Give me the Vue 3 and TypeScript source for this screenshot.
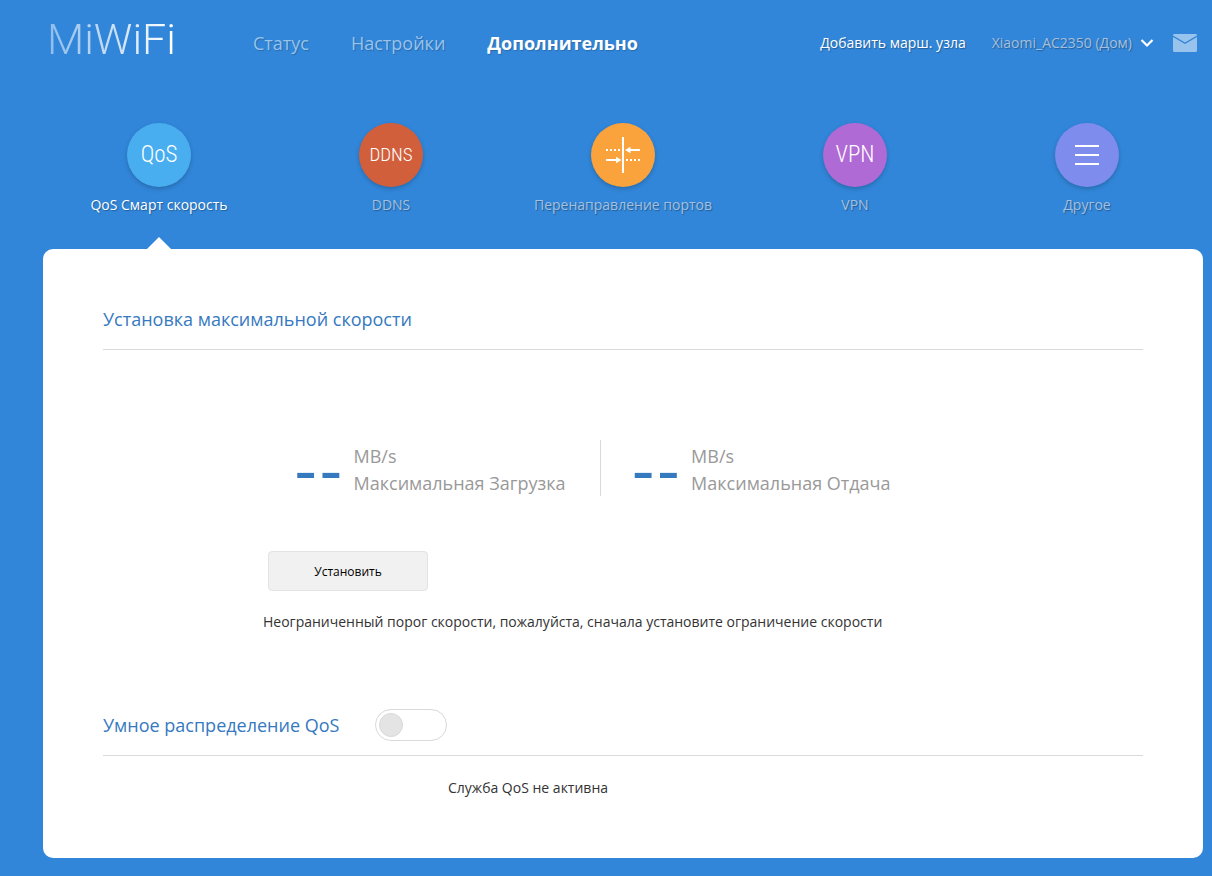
<script setup lang="ts">
import { ref } from 'vue'

interface NavItem { label: string; active?: boolean }
interface Feature { id: string; label: string; glyph?: string; active?: boolean }
interface Speed { id: string; value: string; label: string }

const nav: NavItem[] = [
  { label: 'Статус' },
  { label: 'Настройки' },
  { label: 'Дополнительно', active: true },
]

const features: Feature[] = [
  { id: 'qos', label: 'QoS Смарт скорость', glyph: 'QoS', active: true },
  { id: 'ddns', label: 'DDNS', glyph: 'DDNS' },
  { id: 'ports', label: 'Перенаправление портов' },
  { id: 'vpn', label: 'VPN', glyph: 'VPN' },
  { id: 'other', label: 'Другое' },
]

const speeds: Speed[] = [
  { id: 'down', value: '--', label: 'Максимальная Загрузка' },
  { id: 'up', value: '--', label: 'Максимальная Отдача' },
]

const qosEnabled = ref(false)
</script>

<template>
  <div class="page">
    <header class="header">
      <a class="logo" href="#">MiWiFi</a>
      <nav class="nav">
        <a v-for="item in nav" :key="item.label" href="#" class="nav-link" :class="{ active: item.active }">{{ item.label }}</a>
      </nav>
      <div class="account">
        <a class="add-node" href="#">Добавить марш. узла</a>
        <button type="button" class="router">
          Xiaomi_AC2350 (Дом)
          <svg class="chevron" viewBox="0 0 14 10" aria-hidden="true">
            <path d="M1.500 2L7 7.500L12.500 2" fill="none" stroke="#fff" stroke-width="2.200" />
          </svg>
        </button>
        <button type="button" class="mail" aria-label="Сообщения">
          <svg viewBox="0 0 24 18" aria-hidden="true">
            <path d="M1 0H23Q24 0 24 1.500L12 8.500L0 1.500Q0 0 1 0Z" />
            <path d="M0 3L12 10L24 3V16.500Q24 18 22.500 18H1.500Q0 18 0 16.500Z" />
          </svg>
        </button>
      </div>
    </header>

    <nav class="features">
      <a v-for="f in features" :key="f.id" href="#" class="feature" :class="{ active: f.active }">
        <span class="disc" :class="f.id">
          <template v-if="f.glyph">{{ f.glyph }}</template>
          <svg v-else-if="f.id === 'ports'" viewBox="0 0 64 64" aria-hidden="true">
            <g fill="#fff">
              <rect x="31" y="14" width="2" height="36" />
              <rect x="38" y="26" width="11" height="2" />
              <path d="M34 27L39.500 23.800V30.200Z" />
              <rect x="15" y="36" width="11" height="2" />
              <path d="M30.500 37L25 33.800V40.200Z" />
            </g>
            <g stroke="#fff" stroke-width="2" stroke-dasharray="2 2">
              <path d="M15 27H29" />
              <path d="M35 37H49" />
            </g>
          </svg>
          <svg v-else viewBox="0 0 64 64" aria-hidden="true">
            <path d="M20 23H44M20 32H44M20 41H44" stroke="#fff" stroke-width="2" />
          </svg>
        </span>
        <span class="feature-label">{{ f.label }}</span>
      </a>
    </nav>

    <main class="card">
      <section>
        <h2 class="title">Установка максимальной скорости</h2>
        <div class="limits">
          <div class="speeds">
            <div v-for="s in speeds" :key="s.id" class="speed">
              <span class="value">{{ s.value }}</span>
              <span class="unit">MB/s<br>{{ s.label }}</span>
            </div>
          </div>
          <button type="button" class="set">Установить</button>
          <p class="hint">Неограниченный порог скорости, пожалуйста, сначала установите ограничение скорости</p>
        </div>
      </section>
      <section>
        <h2 class="title with-switch">
          <label for="qos-switch">Умное распределение QoS</label>
          <input id="qos-switch" v-model="qosEnabled" type="checkbox" class="switch">
        </h2>
        <p class="status">Служба QoS не активна</p>
      </section>
    </main>
  </div>
</template>

<style>
body {
  background: #3186d9;
}
</style>

<style scoped>
.page {
  box-sizing: border-box;
  min-height: 100vh;
  padding: 0 9px 18px 43px;
  background: #3186d9;
  color: #333;
  font-family: "Open Sans", "Noto Sans", sans-serif;
  font-size: 14px;
}

a {
  color: inherit;
  text-decoration: none;
}

button {
  padding: 0;
  border: 0;
  background: none;
  color: inherit;
  font: inherit;
  cursor: pointer;
}

.header {
  display: flex;
  align-items: center;
  height: 86px;
  padding: 0 6px 0 4px;
}

.logo {
  width: 162px;
  margin-right: 44px;
  margin-top: -8px;
  background: linear-gradient(90deg, rgba(255, 255, 255, 0.45), #fff 124px);
  background-clip: text;
  color: transparent;
  font-family: Roboto, sans-serif;
  font-size: 43px;
  font-weight: 300;
  line-height: 52px;
}

.nav {
  display: flex;
  gap: 42px;
  color: #98c3ec;
  font-size: 18px;
  line-height: 24px;
  text-shadow: 1px 1px 1px rgba(0, 0, 0, 0.2);
}

.nav-link.active {
  color: #fff;
  font-weight: 700;
}

.account {
  display: flex;
  align-items: center;
  margin-left: auto;
  color: #fff;
  line-height: 20px;
  text-shadow: 1px 1px 1px rgba(0, 0, 0, 0.3);
}

.router {
  display: flex;
  align-items: center;
  gap: 8px;
  margin: 0 19px 0 26px;
  color: #a6bfdc;
  text-shadow: inherit;
}

.chevron {
  width: 14px;
  height: 10px;
}

.mail svg {
  display: block;
  width: 24px;
  height: 18px;
  fill: #98c3ec;
}

.features {
  display: grid;
  grid-template-columns: repeat(5, 1fr);
  height: 126px;
  padding-top: 37px;
}

.feature {
  display: flex;
  flex-direction: column;
  align-items: center;
  color: #a3c0e0;
  line-height: 20px;
  text-shadow: 1px 1px 1px rgba(0, 0, 0, 0.3);
}

.feature.active {
  color: #fff;
}

.feature.active::after {
  width: 0;
  margin-top: auto;
  border: 12px solid transparent;
  border-top: 0;
  border-bottom-color: #fff;
  content: "";
}

.disc {
  display: flex;
  align-items: center;
  justify-content: center;
  width: 64px;
  height: 64px;
  margin-bottom: 8px;
  border-radius: 50%;
  box-shadow: 0 2px 4px rgba(0, 0, 0, 0.2);
  color: #fff;
  font-family: "Roboto Condensed", "Liberation Sans Narrow", Roboto, sans-serif;
  font-size: 23px;
  font-weight: 300;
  text-shadow: none;
}

.disc svg {
  width: 64px;
  height: 64px;
}

.qos { background: #49aeef; }
.ddns { background: #d15f3c; font-size: 19px; }
.ports { background: #faa23c; }
.vpn { background: #b06ad6; }
.other { background: #7e8cee; }

.card {
  padding: 50px 60px 59px;
  border-radius: 10px;
  background: #fff;
}

.title {
  display: flex;
  align-items: center;
  box-sizing: border-box;
  height: 51px;
  margin: 0;
  padding-bottom: 10px;
  border-bottom: 1px solid #d9d9d9;
  color: #3579bf;
  font-size: 18px;
  font-weight: 400;
  line-height: 28px;
}

.with-switch {
  gap: 36px;
}

.limits {
  max-width: 710px;
  margin: 0 auto;
  padding: 90px 0 72px;
}

.speeds {
  display: flex;
  margin-bottom: 55px;
}

.speed {
  display: flex;
  align-items: center;
  gap: 10px;
  height: 56px;
  padding: 0 34px 0 25px;
}

.speed + .speed {
  padding-left: 30px;
  border-left: 1px solid #d9d9d9;
}

.value {
  padding-top: 4px;
  color: #3579bf;
  font-family: Lato, sans-serif;
  font-size: 68px;
  line-height: 52px;
}

.unit {
  padding-top: 4px;
  color: #999;
  font-size: 18px;
  line-height: 27px;
}

.set {
  display: block;
  box-sizing: border-box;
  width: 160px;
  height: 40px;
  border: 1px solid #e3e3e3;
  border-radius: 4px;
  background: #f1f1f1;
  color: #000;
  font-size: 12px;
}

.hint {
  margin: 20px 0 0 -5px;
  line-height: 22px;
}

.switch {
  box-sizing: border-box;
  width: 72px;
  height: 32px;
  margin: 0;
  padding: 3px;
  border: 1px solid #d9d9d9;
  border-radius: 16px;
  appearance: none;
  background: #fff;
}

.switch::before {
  display: block;
  box-sizing: border-box;
  width: 24px;
  height: 24px;
  border: 1px solid #d9d9d9;
  border-radius: 50%;
  background: #e4e4e4;
  content: "";
}

.switch:checked::before {
  margin-left: auto;
  background: #3186d9;
}

.status {
  margin: 21px 0 0 345px;
  line-height: 22px;
}
</style>
